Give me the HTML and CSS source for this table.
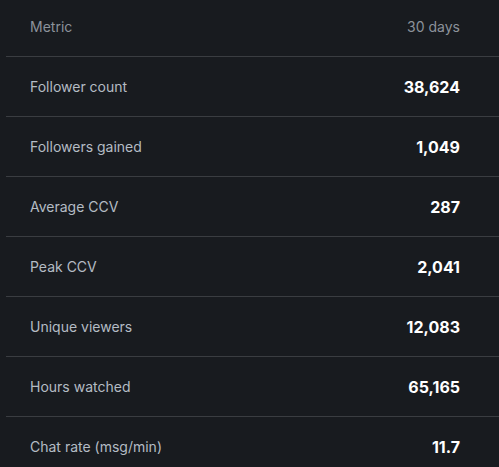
FILE: index.html
```html
<!DOCTYPE html>
<html lang="en">
  <head>
    <meta charset="UTF-8" />
    <meta name="viewport" content="width=device-width, initial-scale=1.0" />
    <title>Channel metrics</title>
    <link rel="stylesheet" href="styles.css">
  </head>
  <body>
    <div class="panel">
      <table class="metrics">
        <thead>
          <tr>
            <th class="name">Metric</th>
            <th class="value">30 days</th>
          </tr>
        </thead>
        <tbody>
          <tr>
            <td class="name">Follower count</td>
            <td class="value">38,624</td>
          </tr>
          <tr>
            <td class="name">Followers gained</td>
            <td class="value">1,049</td>
          </tr>
          <tr>
            <td class="name">Average CCV</td>
            <td class="value">287</td>
          </tr>
          <tr>
            <td class="name">Peak CCV</td>
            <td class="value">2,041</td>
          </tr>
          <tr>
            <td class="name">Unique viewers</td>
            <td class="value">12,083</td>
          </tr>
          <tr>
            <td class="name">Hours watched</td>
            <td class="value">65,165</td>
          </tr>
          <tr>
            <td class="name">Chat rate (msg/min)</td>
            <td class="value">11.7</td>
          </tr>
        </tbody>
      </table>
    </div>
  </body>
</html>
```

FILE: styles.css
```css
html,
body {
  margin: 0;
  padding: 0;
  background-color: #181b1f;
}
body {
  font-family: Inter, "Noto Sans", sans-serif;
  font-size: 14px;
  line-height: 20px;
}
.panel {
  padding-left: 6px;
}
.metrics {
  width: 100%;
  border-collapse: collapse;
}
.metrics th {
  font-weight: 400;
  color: #8c929a;
  padding: 17px 24px 19px;
  border-bottom: 1px solid #3a3d41;
}
.metrics td {
  padding: 20px 24px 19px;
  border-bottom: 1px solid #3a3d41;
}
.metrics .name {
  text-align: left;
  color: #b4bcc4;
}
.metrics th.name {
  color: #8c929a;
}
.metrics .value {
  text-align: right;
  padding-right: 39px;
}
.metrics td.value {
  color: #ffffff;
  font-weight: 700;
  font-size: 16px;
}
```
